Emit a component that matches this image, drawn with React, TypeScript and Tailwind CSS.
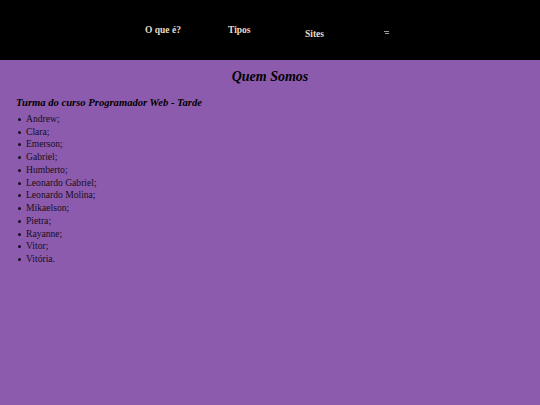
const alunos = [
  'Andrew;',
  'Clara;',
  'Emerson;',
  'Gabriel;',
  'Humberto;',
  'Leonardo Gabriel;',
  'Leonardo Molina;',
  'Mikaelson;',
  'Pietra;',
  'Rayanne;',
  'Vitor;',
  'Vitória.',
];

export default function App() {
  return (
    <div className="min-h-[405px] bg-[#8c5bad] font-['Liberation_Serif',Georgia,serif] text-[#160d1c]">
      <header className="h-[60px] bg-black">
        <nav className="flex items-start pl-[145px] pt-[23px] text-[9.5px] font-bold text-[#e9dcc9]">
          <a className="w-[83px]">O que é?</a>
          <a className="w-[77px]">Tipos</a>
          <a className="mt-[4px] w-[79px]">Sites</a>
          <span className="mt-[8px] flex flex-col gap-[1px]">
            <span className="h-px w-[5px] bg-[#9a9a9a]" />
            <span className="ml-[1px] h-px w-[4px] bg-[#9a9a9a]" />
          </span>
        </nav>
      </header>
      <main className="px-4 pt-[6px]">
        <h1 className="text-center text-[14px] font-bold italic text-black">Quem Somos</h1>
        <h3 className="mt-[8px] text-[10.6px] font-bold italic text-black">Turma do curso Programador Web - Tarde</h3>
        <ul className="mt-[2px] pl-[2px] text-[9.6px] leading-[12.75px]">
          {alunos.map((nome) => (
            <li key={nome} className="flex items-center gap-[5px]">
              <span className="h-[3px] w-[3px] rounded-full bg-[#160d1c]" />
              {nome}
            </li>
          ))}
        </ul>
      </main>
    </div>
  );
}
